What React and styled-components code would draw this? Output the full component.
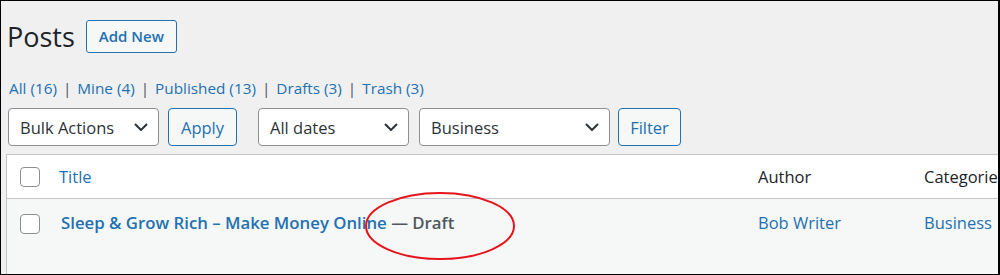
import styled, { createGlobalStyle } from 'styled-components';

const GlobalStyle = createGlobalStyle`
  html, body {
    margin: 0;
    padding: 0;
    background: #fff;
  }
  * {
    box-sizing: border-box;
  }
`;

const Frame = styled.div`
  position: relative;
  width: 1000px;
  height: 275px;
  overflow: hidden;
  background: #f0f0f1;
  border: 1px solid #000;
  border-right-width: 2px;
  padding: 0 0 0 5px;
  font-family: 'Open Sans', 'Noto Sans', sans-serif;
  color: #1d2327;
`;

const Heading = styled.div`
  display: flex;
  align-items: center;
  height: 40px;
  margin-top: 15px;
`;

const Title = styled.h1`
  margin: 0 0 0 1px;
  font-size: 27px;
  font-weight: 400;
  color: #1d2327;
`;

const AddNew = styled.a`
  display: inline-flex;
  align-items: center;
  justify-content: center;
  margin-left: 11px;
  width: 91px;
  height: 33px;
  border: 1px solid #2271b1;
  border-radius: 3px;
  background: #f6f7f7;
  color: #2271b1;
  font-size: 15px;
  font-weight: 600;
  text-decoration: none;
`;

const SubSub = styled.ul`
  display: flex;
  list-style: none;
  margin: 21px 0 0 3px;
  padding: 0;
  font-size: 15.3px;
  line-height: 22px;
  color: #50575e;
`;

const SubItem = styled.li`
  &:not(:last-child)::after {
    content: '|';
    margin: 0 6px;
    color: #50575e;
  }
`;

const SubLink = styled.a`
  color: #2271b1;
  text-decoration: none;
`;

const TableNav = styled.div`
  display: flex;
  align-items: center;
  margin: 9px 0 0 2px;
  height: 38px;
`;

const Select = styled.div`
  display: flex;
  align-items: center;
  justify-content: space-between;
  width: ${(p) => p.width}px;
  height: 38px;
  margin-right: ${(p) => p.gap ?? 9}px;
  padding: 0 10px 0 11px;
  border: 1px solid #8c8f94;
  border-radius: 4px;
  background: #fff;
  color: #2c3338;
  font-size: 16.5px;
`;

const Button = styled.button`
  height: 38px;
  width: ${(p) => p.width}px;
  margin-right: ${(p) => p.gap ?? 0}px;
  border: 1px solid #2271b1;
  border-radius: 4px;
  background: #f6f7f7;
  color: #2271b1;
  font-family: inherit;
  font-size: 16.5px;
  padding: 0;
`;

const Chevron = () => (
  <svg width="14" height="8" viewBox="0 0 14 8">
    <path d="M1 1l6 6 6-6" fill="none" stroke="#2c3338" strokeWidth="2" />
  </svg>
);

const Table = styled.div`
  width: 1100px;
  margin-top: 8px;
  border: 1px solid #c3c4c7;
  background: #fff;
`;

const Row = styled.div`
  display: grid;
  grid-template-columns: 41px 699px 166px 1fr;
  height: ${(p) => p.h}px;
  background: ${(p) => (p.striped ? '#f6f7f7' : '#fff')};
  border-bottom: ${(p) => (p.head ? '1px solid #c3c4c7' : 'none')};
  align-items: ${(p) => (p.head ? 'center' : 'start')};
  padding-top: ${(p) => (p.head ? 0 : 12)}px;
`;

const CheckCell = styled.div`
  display: flex;
  padding-left: 13px;
  padding-top: ${(p) => (p.head ? 0 : 3)}px;
`;

const Checkbox = styled.span`
  display: block;
  width: 20px;
  height: 20px;
  border: 1px solid #8c8f94;
  border-radius: 4px;
  background: #fff;
`;

const Cell = styled.div`
  padding-left: ${(p) => p.pad ?? 11}px;
  font-size: ${(p) => p.size ?? 16.5}px;
  color: ${(p) => (p.link ? '#2271b1' : '#1d2327')};
  white-space: nowrap;
`;

const RowTitle = styled.a`
  color: #2271b1;
  font-weight: 600;
  text-decoration: none;
`;

const State = styled.span`
  color: #50575e;
  font-weight: 600;
`;

const Circle = styled.svg`
  position: absolute;
  left: 363px;
  top: 190px;
  pointer-events: none;
`;

const links = [
  ['All', 16],
  ['Mine', 4],
  ['Published', 13],
  ['Drafts', 3],
  ['Trash', 3],
];

export default function App() {
  return (
    <>
      <GlobalStyle />
      <Frame>
        <Heading>
          <Title>Posts</Title>
          <AddNew href="#">Add New</AddNew>
        </Heading>
        <SubSub>
          {links.map(([label, n]) => (
            <SubItem key={label}>
              <SubLink href="#">
                {label} ({n})
              </SubLink>
            </SubItem>
          ))}
        </SubSub>
        <TableNav>
          <Select width={151}>
            Bulk Actions <Chevron />
          </Select>
          <Button width={69} gap={21}>Apply</Button>
          <Select width={151} gap={10}>
            All dates <Chevron />
          </Select>
          <Select width={191} gap={8}>
            Business <Chevron />
          </Select>
          <Button width={63}>Filter</Button>
        </TableNav>
        <Table>
          <Row head h={44}>
            <CheckCell head>
              <Checkbox />
            </CheckCell>
            <Cell link>Title</Cell>
            <Cell>Author</Cell>
            <Cell>Categories</Cell>
          </Row>
          <Row striped h={80}>
            <CheckCell>
              <Checkbox />
            </CheckCell>
            <Cell pad={13} size={16.8}>
              <RowTitle href="#">Sleep &amp; Grow Rich – Make Money Online</RowTitle>
              <State> — Draft</State>
            </Cell>
            <Cell link>Bob Writer</Cell>
            <Cell link>Business</Cell>
          </Row>
        </Table>
        <Circle width="154" height="70" viewBox="0 0 154 70">
          <ellipse cx="76" cy="35" rx="74" ry="33" fill="none" stroke="#e8141b" strokeWidth="2" />
        </Circle>
      </Frame>
    </>
  );
}
